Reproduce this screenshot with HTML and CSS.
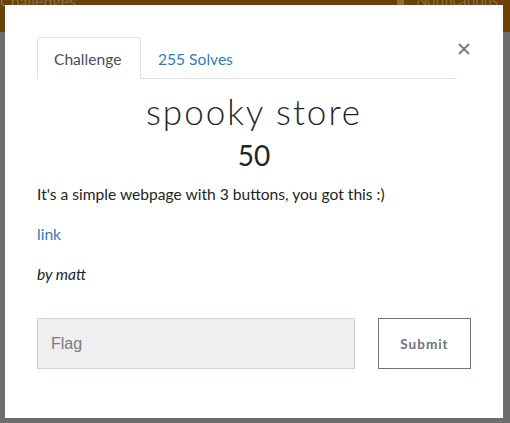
FILE: index.html
```html
<!DOCTYPE html>
<html>
<head>
<meta charset="utf-8">
<link rel="stylesheet" href="styles.css">
</head>
<body>
<header class="topbar">
  <span class="brand">Challenges</span>
  <span class="notif"><span class="bell"></span>Notifications</span>
</header>
<div class="modal">
  <div class="modal-head">
    <ul class="tabs">
      <li class="tab active">Challenge</li>
      <li class="tab"><a href="#">255 Solves</a></li>
    </ul>
    <span class="close">
      <svg width="12" height="12" viewBox="0 0 12 12"><path d="M1 1L11 11M11 1L1 11" stroke="#7b7b7b" stroke-width="2"/></svg>
    </span>
  </div>
  <h2 class="title">spooky store</h2>
  <div class="points">50</div>
  <p class="desc">It's a simple webpage with 3 buttons, you got this :)</p>
  <p class="desc"><a href="#">link</a></p>
  <p class="desc author">by matt</p>
  <form class="flag-row">
    <input class="flag" type="text" placeholder="Flag">
    <button class="submit" type="button">Submit</button>
  </form>
</div>
</body>
</html>
```
FILE: styles.css
```css
html, body {
  margin: 0;
  padding: 0;
}
body {
  width: 510px;
  height: 423px;
  overflow: hidden;
  background: #6e6e6e;
  font-family: "Lato", "Liberation Sans", sans-serif;
  position: relative;
}
.topbar {
  height: 32px;
  background: #6a4107;
  display: flex;
  justify-content: space-between;
  align-items: flex-start;
  overflow: hidden;
  color: #8c6d44;
  font-size: 16px;
  line-height: 20px;
  padding: 0 12px 0 0;
}
.brand {
  margin-top: -9px;
}
.notif {
  margin-top: -9px;
  display: flex;
  align-items: flex-start;
  font-size: 14.5px;
}
.bell {
  width: 7px;
  height: 17px;
  background: #8c6d44;
  border-radius: 3px;
  margin-right: 12px;
}
.modal {
  position: absolute;
  left: 5px;
  top: 5px;
  width: 498px;
  height: 413px;
  background: #fff;
  box-sizing: border-box;
  padding: 32px 32px 0 32px;
}
.modal-head {
  display: flex;
  align-items: flex-start;
  width: 420px;
}
.tabs {
  list-style: none;
  margin: 0;
  padding: 0;
  display: flex;
  flex: 1;
  border-bottom: 1px solid #dee2e6;
  height: 41px;
}
.tab {
  font-size: 15.6px;
  height: 41px;
  box-sizing: border-box;
  padding: 12px 16px 0 16px;
  border: 1px solid transparent;
  border-top-left-radius: 4px;
  border-top-right-radius: 4px;
  line-height: 18px;
}
.tab.active {
  border-color: #dee2e6;
  border-bottom-color: #fff;
  color: #495057;
  width: 104px;
  height: 42px;
  background: #fff;
}
.tab a {
  color: #337ab7;
  text-decoration: none;
}
.close {
  position: absolute;
  left: 453px;
  top: 34px;
}
.title {
  margin: 12px 0 0 0;
  text-align: center;
  font-weight: 300;
  font-size: 35px;
  letter-spacing: 2px;
  line-height: 40px;
  color: #212529;
}
.points {
  text-align: center;
  font-size: 28px;
  line-height: 34px;
  color: #212529;
  margin-top: 7px;
}
.desc {
  margin: 12px 0 0 0;
  font-size: 15.6px;
  line-height: 20px;
  color: #212529;
}
.desc + .desc {
  margin-top: 20px;
}
.desc a {
  color: #337ab7;
  text-decoration: none;
}
.author {
  font-style: italic;
}
.flag-row {
  display: flex;
  margin-top: 34px;
  gap: 23px;
}
.flag {
  width: 318px;
  height: 51px;
  box-sizing: border-box;
  background: #efefef;
  border: 1px solid #ced4da;
  padding: 0 13px;
  font-family: "Liberation Sans", Arial, sans-serif;
  font-size: 16px;
  color: #495057;
}
.flag::placeholder {
  color: #7b7b7b;
}
.submit {
  width: 93px;
  height: 51px;
  box-sizing: border-box;
  background: #fff;
  border: 1px solid #6c757d;
  color: #6c757d;
  font-family: "Lato", sans-serif;
  font-weight: 700;
  font-size: 13.5px;
  letter-spacing: 1px;
}
```
